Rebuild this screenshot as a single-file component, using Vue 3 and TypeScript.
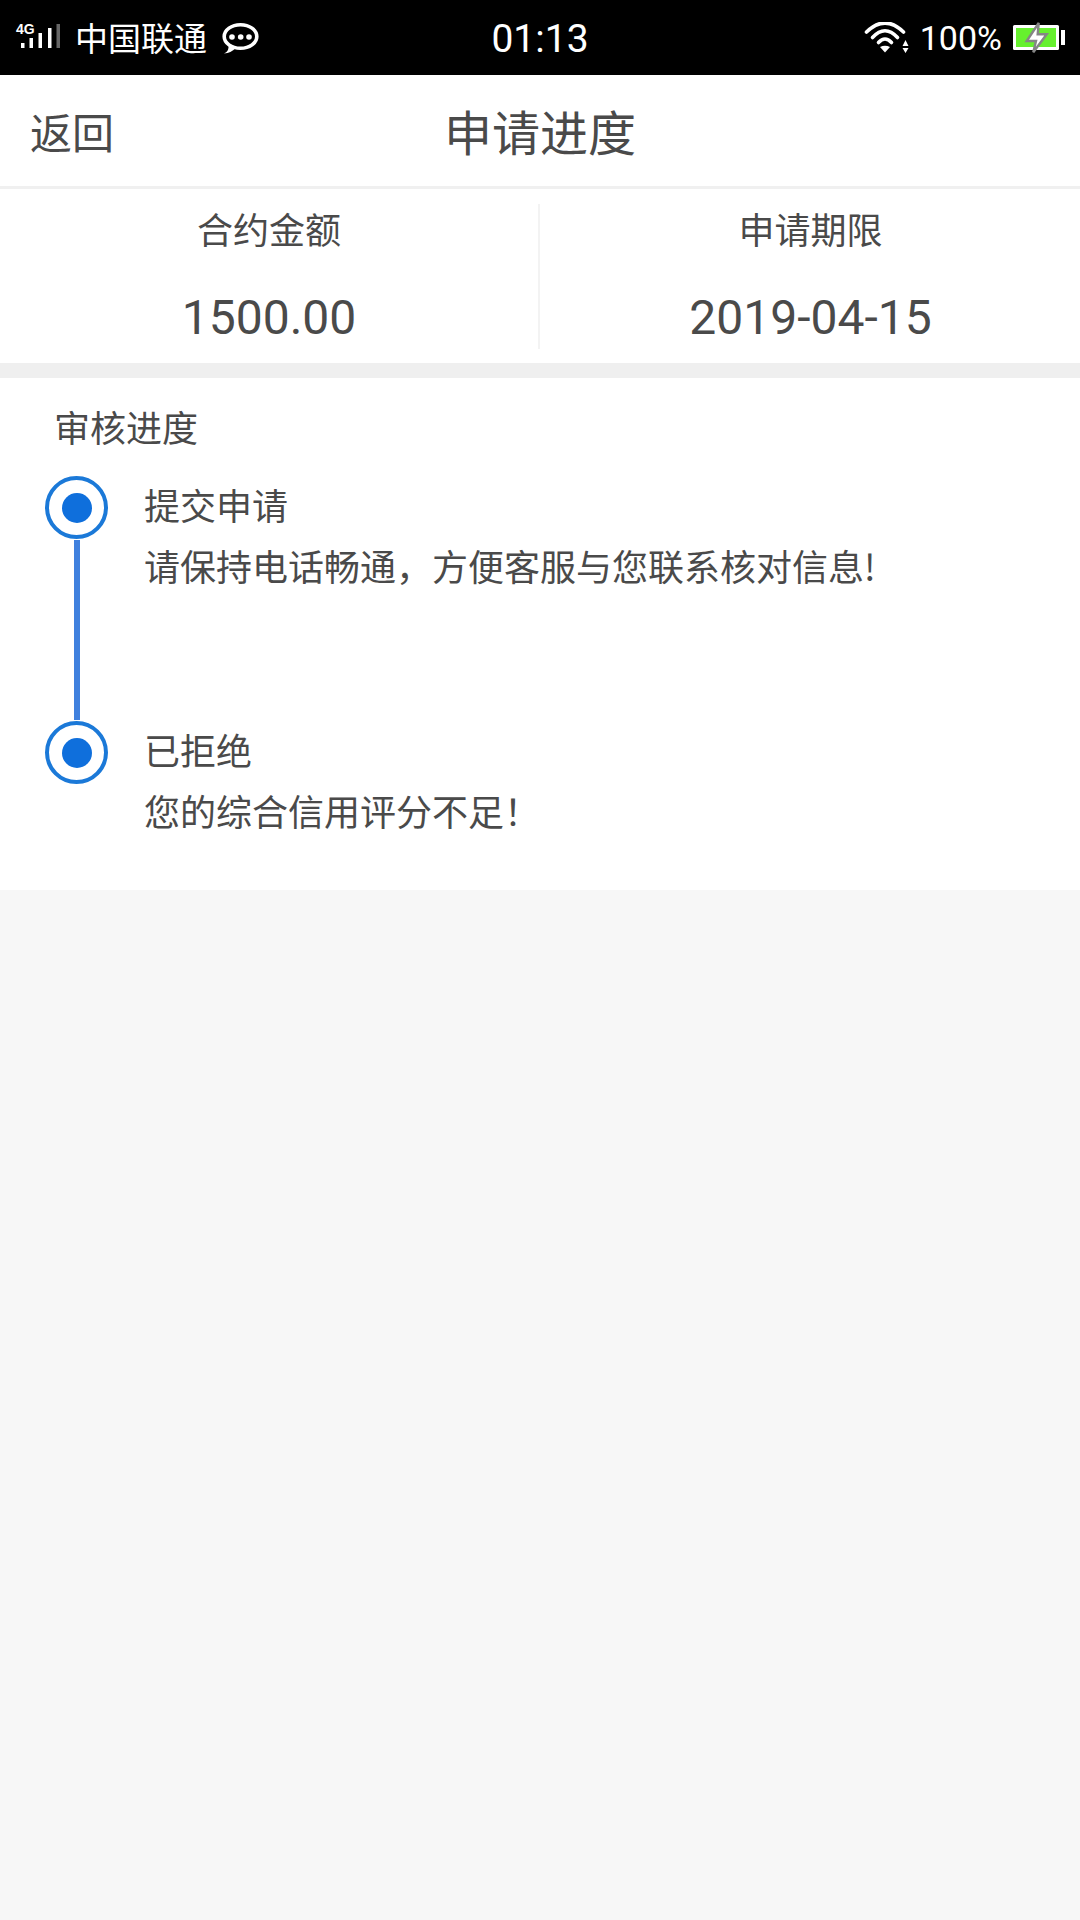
<script setup lang="ts">
const steps = [
  { title: '提交申请', desc: '请保持电话畅通，方便客服与您联系核对信息!' },
  { title: '已拒绝', desc: '您的综合信用评分不足！' },
]
const stats = [
  { label: '合约金额', value: '1500.00' },
  { label: '申请期限', value: '2019-04-15' },
]
</script>

<template>
  <div class="page">
    <div class="status">
      <div class="status-left">
        <div class="signal-wrap">
          <span class="four-g">4G</span>
          <svg class="signal" width="44" height="28" viewBox="0 0 44 28">
            <rect x="5" y="21" width="3.500" height="5" fill="#fff" />
            <rect x="13.500" y="16" width="3.500" height="10" fill="#fff" />
            <rect x="22.500" y="11" width="3.500" height="15" fill="#fff" />
            <rect x="32" y="6" width="3.500" height="20" fill="#fff" />
            <rect x="40.500" y="2" width="3.500" height="24" fill="#666" />
          </svg>
        </div>
        <span class="carrier">中国联通</span>
        <svg class="chat" width="38" height="32" viewBox="0 0 38 32">
          <ellipse cx="18.500" cy="14.500" rx="16.300" ry="11.800" fill="none" stroke="#fff" stroke-width="3.600" />
          <path d="M2 31.500C6 30 7 27 6.500 21L14 26C10 29.500 7 31 2 31.500z" fill="#fff" />
          <circle cx="10" cy="15" r="2.800" fill="#fff" />
          <circle cx="18.700" cy="15" r="2.800" fill="#fff" />
          <circle cx="27" cy="15" r="2.800" fill="#fff" />
        </svg>
      </div>
      <span class="clock">01:13</span>
      <div class="status-right">
        <svg class="wifi" width="46" height="32" viewBox="0 0 46 32">
          <g fill="none" stroke="#fff" stroke-width="3.600" stroke-linecap="round">
            <path d="M2.500 10Q21 -8 39.500 10" />
            <path d="M8.500 15.500Q21 2 33.500 15.500" />
            <path d="M14.500 20.500Q21 13.500 27.500 20.500" />
          </g>
          <path d="M16 25Q21 22.500 26 25L21 30.500z" fill="#fff" />
          <path d="M38.500 24l3-6 3 6zM38.500 26h6l-3 5z" fill="#fff" />
        </svg>
        <span class="pct">100%</span>
        <svg class="battery" width="54" height="32" viewBox="0 0 54 32">
          <rect x="1" y="3" width="46" height="25" fill="#fff" rx="1.500" />
          <rect x="4" y="6" width="40" height="19" fill="#66f02e" />
          <path d="M26.700 1L14.700 19H24L21.300 30.300L34.700 12.300H25.700z" fill="#fff" stroke="#858585" stroke-width="2.400" stroke-linejoin="miter" />
          <rect x="49" y="8" width="4" height="15" fill="#fff" />
        </svg>
      </div>
    </div>

    <header class="nav">
      <span class="back">返回</span>
      <span class="title">申请进度</span>
    </header>

    <section class="summary">
      <div v-for="s in stats" :key="s.label" class="stat">
        <div class="stat-label">{{ s.label }}</div>
        <div class="stat-value">{{ s.value }}</div>
      </div>
    </section>

    <section class="card">
      <div class="card-title">审核进度</div>
      <div v-for="(step, i) in steps" :key="step.title" class="step">
        <div class="rail">
          <div class="ring"><div class="dot"></div></div>
          <div v-if="i < steps.length - 1" class="line"></div>
        </div>
        <div class="body">
          <div class="step-title">{{ step.title }}</div>
          <div class="step-desc">{{ step.desc }}</div>
        </div>
      </div>
    </section>
  </div>
</template>

<style>
html, body { margin: 0; padding: 0; background: #f7f7f7; }
</style>

<style scoped>
.page {
  width: 1080px;
  min-height: 1920px;
  background: #f7f7f7;
  color: #4a4a4a;
  font-family: "Noto Sans CJK SC", "Noto Sans", sans-serif;
}
.status {
  height: 75px;
  background: #000;
  color: #fff;
  position: relative;
  display: flex;
  align-items: center;
  justify-content: space-between;
  padding: 0 14px 0 16px;
  box-sizing: border-box;
}
.status-left, .status-right { display: flex; align-items: center; }
.signal-wrap { position: relative; width: 44px; height: 28px; margin-top: -3px; }
.signal { display: block; }
.four-g {
  position: absolute;
  left: 0;
  top: 0;
  font: 700 14px/14px "Liberation Sans", sans-serif;
  color: #fff;
}
.carrier { font-size: 33px; line-height: 40px; margin-left: 15px; margin-top: -1px; }
.chat { margin-left: 15px; }
.clock {
  position: absolute;
  left: 0;
  right: 0;
  top: 0;
  text-align: center;
  font: 400 39px/78px Roboto, sans-serif;
}
.wifi { margin-right: 10px; }
.pct { font: 400 34px/40px Roboto, sans-serif; margin-right: 10px; }
.nav {
  height: 111px;
  background: #fff;
  border-bottom: 3px solid #f0f0f0;
  display: flex;
  align-items: center;
  position: relative;
}
.back { font-size: 42px; margin-left: 30px; line-height: 60px; }
.title {
  position: absolute;
  left: 0;
  right: 0;
  text-align: center;
  font-size: 48px;
  line-height: 111px;
}
.summary {
  height: 174px;
  background: #fff;
  display: flex;
  padding: 15px 0 13px;
  box-sizing: border-box;
}
.stat {
  flex: 1;
  text-align: center;
  height: 145px;
}
.stat:first-child { flex: 0 0 540px; box-sizing: border-box; border-right: 2px solid #f3f3f3; }
.stat:last-child { padding-left: 1px; }
.stat-label { font-size: 36px; line-height: 50px; margin-top: -1px; }
.stat-value { font: 400 48px/60px Roboto, sans-serif; margin-top: 35px; }
.card {
  border-top: 15px solid #efefef;
  background: #fff;
  height: 527px;
  box-sizing: border-box;
  padding: 23px 0 0 45px;
}
.card-title { font-size: 36px; line-height: 50px; margin-left: 9px; margin-bottom: 25px; }
.step { display: flex; }
.step:nth-of-type(2) { height: 245px; }
.rail {
  width: 63px;
  display: flex;
  flex-direction: column;
  align-items: center;
}
.ring {
  width: 63px;
  height: 63px;
  box-sizing: border-box;
  border: 4px solid #1b79d8;
  border-radius: 50%;
  background: #fff;
  display: flex;
  align-items: center;
  justify-content: center;
  flex: none;
}
.dot { width: 30px; height: 30px; border-radius: 50%; background: #0f6fdc; }
.line { flex: 1; width: 6px; background: #3f80de; margin-top: 1px; margin-bottom: 1px; }
.body { margin-left: 36px; margin-top: -2px; }
.step-title { font-size: 36px; line-height: 61px; }
.step-desc { font-size: 36px; line-height: 61px; }
</style>
